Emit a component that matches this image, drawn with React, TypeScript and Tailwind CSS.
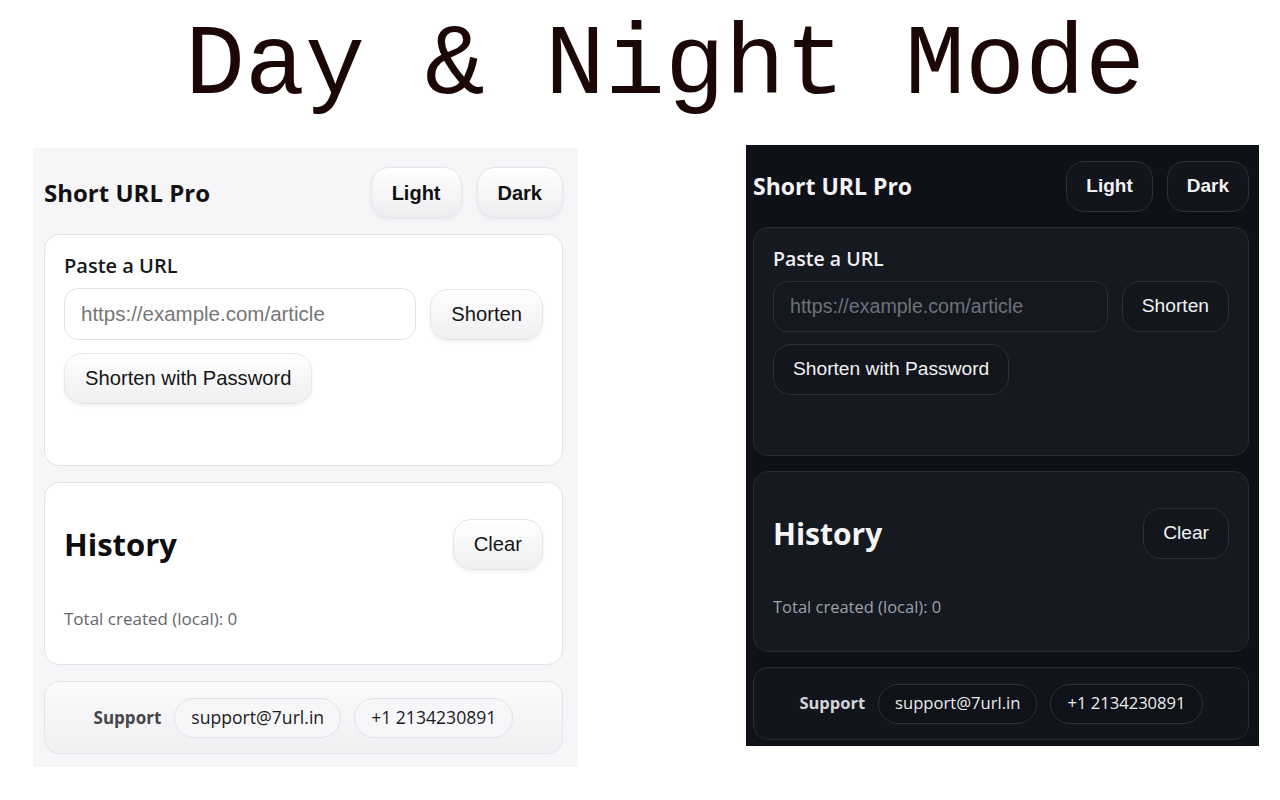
import React from "react";

type Theme = {
  panel: string;
  title: string;
  toggleWrap: string;
  toggleBtn: string;
  card: string;
  card1: string;
  card2: string;
  label: string;
  inputRow: string;
  input: string;
  btn: string;
  swpMargin: string;
  history: string;
  total: string;
  supportCard: string;
  supportLabel: string;
  pill: string;
};

const light: Theme = {
  panel:
    "w-[545px] mt-[31px] bg-[#f6f6f8] pl-[11px] pr-[15px] pt-[19px] pb-[13px] gap-[16px]",
  title: "text-[24px] text-[#111113]",
  toggleWrap: "gap-[15px]",
  toggleBtn:
    "h-[51px] px-[20px] text-[20px] font-bold text-[#111] border border-[#e5e5ea] bg-linear-to-b from-white to-[#eeeef1] shadow-[0_2px_4px_rgba(0,0,0,0.06)]",
  card: "bg-white border border-[#e3e3e8] px-[19px]",
  card1: "h-[232px] pt-[17px]",
  card2: "h-[183px] pt-[36px]",
  label: "text-[20px] leading-[27px] text-[#16161a]",
  inputRow: "mt-[9px] gap-[14px]",
  input:
    "h-[52px] text-[20.5px] border border-[#e0e0e6] bg-white text-[#111] placeholder:text-[#767676]",
  btn:
    "h-[51px] px-[20px] text-[20.2px] text-[#151515] border border-[#e5e5ea] bg-linear-to-b from-white to-[#efeff2] shadow-[0_2px_4px_rgba(0,0,0,0.06)]",
  swpMargin: "mt-[13px]",
  history: "text-[31px] text-[#0d0d10]",
  total: "mt-[37px] text-[17px] text-[#66666b]",
  supportCard:
    "h-[73px] gap-[13px] border border-[#e3e3e8] bg-linear-to-b from-[#fbfbfc] to-[#f0f0f3]",
  supportLabel: "text-[17px] text-[#45454a]",
  pill: "h-[40px] px-[16px] text-[17.6px] text-[#1a1a1d] border border-[#e2e2e7] bg-[#f7f7f9]",
};

const dark: Theme = {
  panel:
    "w-[513px] mt-[28px] bg-[#0e1117] pl-[7px] pr-[10px] pt-[16px] pb-[6px] gap-[15px]",
  title: "text-[23px] text-[#f4f4f6]",
  toggleWrap: "gap-[14px]",
  toggleBtn:
    "h-[51px] px-[19px] text-[19px] font-bold text-[#f2f2f4] border border-[#2b3039] bg-[#12151c]",
  card: "bg-[#151920] border border-[#272c35] px-[19px]",
  card1: "h-[229px] pt-[17px]",
  card2: "h-[181px] pt-[36px]",
  label: "text-[19.5px] leading-[27px] text-[#f0f0f2]",
  inputRow: "mt-[9px] gap-[14px]",
  input:
    "h-[51px] text-[19.6px] border border-[#2a2f38] bg-[#141820] text-[#eee] placeholder:text-[#6d727b]",
  btn:
    "h-[51px] px-[19px] text-[19.2px] text-[#f1f1f3] border border-[#2b3039] bg-[#13161d]",
  swpMargin: "mt-[12px]",
  history: "text-[30px] text-[#f5f5f7]",
  total: "mt-[36px] text-[16.5px] text-[#9da2aa]",
  supportCard: "h-[73px] gap-[13px] border border-[#272c35] bg-[#12151c]",
  supportLabel: "text-[16.5px] text-[#d4d6da]",
  pill: "h-[40px] px-[16px] text-[16.6px] text-[#ececee] border border-[#2c3139] bg-[#0f1218]",
};

function Panel({ t }: { t: Theme }) {
  const sans = "font-['Open_Sans','Noto_Sans',sans-serif]";
  const arial = "font-['Liberation_Sans',Arial,sans-serif]";
  return (
    <div className={`flex flex-col ${t.panel} ${sans}`}>
      <header className="flex h-[51px] items-center justify-between">
        <h1 className={`font-bold leading-none ${t.title}`}>Short URL Pro</h1>
        <div className={`flex ${t.toggleWrap}`}>
          <button className={`flex items-center rounded-[18px] ${arial} ${t.toggleBtn}`}>Light</button>
          <button className={`flex items-center rounded-[18px] ${arial} ${t.toggleBtn}`}>Dark</button>
        </div>
      </header>

      <section className={`rounded-[15px] ${t.card} ${t.card1}`}>
        <div className={`font-semibold ${t.label}`}>Paste a URL</div>
        <div className={`flex items-center ${t.inputRow}`}>
          <input
            className={`min-w-0 flex-1 rounded-[14px] px-[16px] outline-none ${arial} ${t.input}`}
            placeholder="https://example.com/article"
          />
          <button className={`flex items-center rounded-[18px] ${arial} ${t.btn}`}>Shorten</button>
        </div>
        <div className={`flex ${t.swpMargin}`}>
          <button className={`flex items-center rounded-[18px] ${arial} ${t.btn}`}>
            Shorten with Password
          </button>
        </div>
      </section>

      <section className={`rounded-[15px] ${t.card} ${t.card2}`}>
        <div className="flex h-[51px] items-center justify-between">
          <h2 className={`font-bold leading-none ${t.history}`}>History</h2>
          <button className={`flex items-center rounded-[18px] ${arial} ${t.btn}`}>Clear</button>
        </div>
        <div className={`leading-[23px] ${t.total}`}>Total created (local): 0</div>
      </section>

      <footer className={`flex items-center justify-center rounded-[15px] ${t.supportCard}`}>
        <span className={`font-bold ${t.supportLabel}`}>Support</span>
        <span className={`flex items-center rounded-full ${t.pill}`}>support@7url.in</span>
        <span className={`flex items-center rounded-full ${t.pill}`}>+1 2134230891</span>
      </footer>
    </div>
  );
}

export default function App() {
  return (
    <div className="h-[800px] w-[1280px] overflow-hidden bg-white">
      <div className="flex justify-center pl-[50px] pt-[17px]">
        <div className="font-['Liberation_Mono','Courier_New',monospace] text-[100px] leading-[100px] whitespace-pre text-[#1c0707]">
          Day &amp; Night Mode
        </div>
      </div>
      <div className="flex items-start gap-[168px] pl-[33px]">
        <Panel t={light} />
        <Panel t={dark} />
      </div>
    </div>
  );
}
